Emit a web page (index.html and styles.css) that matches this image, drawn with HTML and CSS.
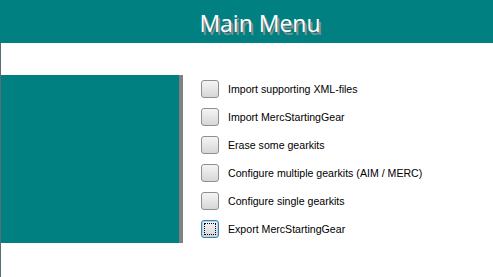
FILE: index.html
```html
<!DOCTYPE html>
<html lang="en">
<head>
  <meta charset="UTF-8">
  <title>Main Menu</title>
  <link rel="stylesheet" href="styles.css">
</head>
<body>
  <div class="header">
    <h1>Main Menu</h1>
  </div>

  <div class="main">
    <div class="side-panel"></div>

    <ul class="menu">
      <li><span class="box"></span>Import supporting XML-files</li>
      <li><span class="box"></span>Import MercStartingGear</li>
      <li><span class="box"></span>Erase some gearkits</li>
      <li><span class="box"></span>Configure multiple gearkits (AIM / MERC)</li>
      <li><span class="box"></span>Configure single gearkits</li>
      <li><span class="box focused"><span class="focus-ring"></span></span>Export MercStartingGear</li>
    </ul>
  </div>
</body>
</html>
```

FILE: styles.css
```css
html, body {
  height: 100%;
}
body {
  margin: 0;
  background: #ffffff;
  font-family: 'Liberation Sans', 'Arial', sans-serif;
  display: flex;
  flex-direction: column;
  overflow: hidden;
}
.header {
  background: #008080;
  height: 43px;
  flex: none;
  display: flex;
  align-items: center;
  justify-content: center;
  padding-left: 27px;
}
h1 {
  margin: 0;
  font-family: 'Open Sans', 'DejaVu Sans', sans-serif;
  font-weight: normal;
  font-size: 23px;
  color: #ffffff;
  text-shadow: 2px 3px 0 #8c8c8c;
  position: relative;
  top: 1px;
}
.main {
  flex: 1;
  display: flex;
  align-items: flex-start;
  border-left: 1px solid #5b6b78;
  padding-top: 32px;
}
.side-panel {
  width: 178px;
  height: 168px;
  background: #008080;
  border-right: 4px solid #808080;
  flex: none;
}
.menu {
  list-style: none;
  margin: 5px 0 0 18px;
  padding: 0;
  font-size: 10.6px;
  color: #000000;
}
.menu li {
  display: flex;
  align-items: center;
  height: 18px;
  margin-bottom: 10px;
}
.box {
  width: 16px;
  height: 16px;
  border: 1px solid #8e8f8f;
  border-radius: 3px;
  background: linear-gradient(#f4f4f4, #e6e6e6 50%, #d6d6d6);
  margin-right: 9px;
  box-sizing: content-box;
  display: flex;
  align-items: center;
  justify-content: center;
}
.box.focused {
  border-color: #3c7fb1;
  box-shadow: inset 0 0 0 1px #a9d9f5;
}
.focus-ring {
  width: 12px;
  height: 12px;
  border: 1px dotted #000000;
  box-sizing: border-box;
}
```
